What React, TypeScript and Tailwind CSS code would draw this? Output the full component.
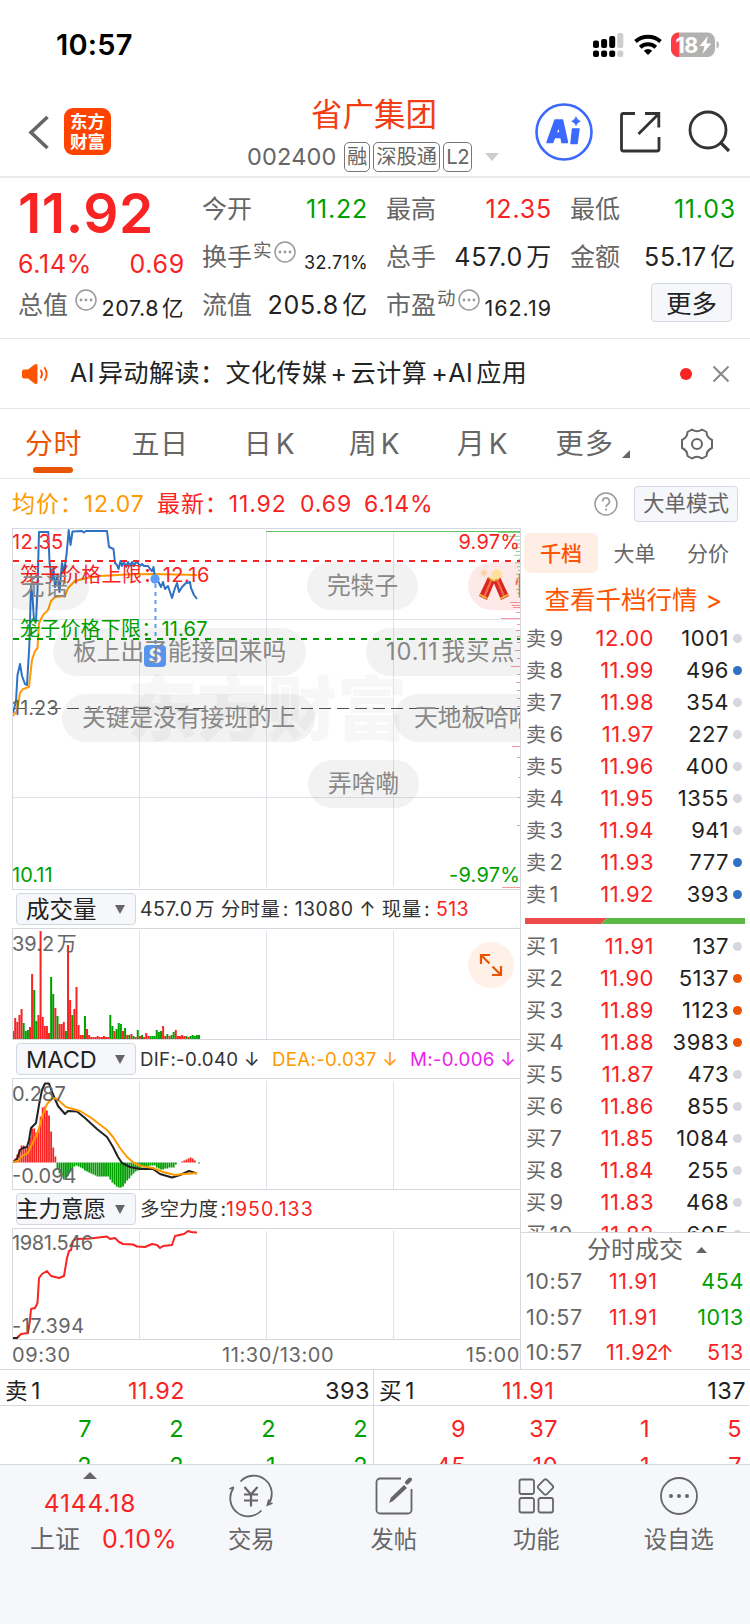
import { Fragment, type ReactNode } from 'react';
import clsx from 'clsx';

type Level = { side: string; price: string; qty: string; dot: string };

const SELLS: Level[] = [
  { side: '卖9', price: '12.00', qty: '1001', dot: 'bg-[#d5d8df]' },
  { side: '卖8', price: '11.99', qty: '496', dot: 'bg-[#2f72c4]' },
  { side: '卖7', price: '11.98', qty: '354', dot: 'bg-[#d5d8df]' },
  { side: '卖6', price: '11.97', qty: '227', dot: 'bg-[#d5d8df]' },
  { side: '卖5', price: '11.96', qty: '400', dot: 'bg-[#d5d8df]' },
  { side: '卖4', price: '11.95', qty: '1355', dot: 'bg-[#d5d8df]' },
  { side: '卖3', price: '11.94', qty: '941', dot: 'bg-[#d5d8df]' },
  { side: '卖2', price: '11.93', qty: '777', dot: 'bg-[#2f72c4]' },
  { side: '卖1', price: '11.92', qty: '393', dot: 'bg-[#2f72c4]' },
];

const BUYS: Level[] = [
  { side: '买1', price: '11.91', qty: '137', dot: 'bg-[#d5d8df]' },
  { side: '买2', price: '11.90', qty: '5137', dot: 'bg-[#ea5504]' },
  { side: '买3', price: '11.89', qty: '1123', dot: 'bg-[#ea5504]' },
  { side: '买4', price: '11.88', qty: '3983', dot: 'bg-[#ea5504]' },
  { side: '买5', price: '11.87', qty: '473', dot: 'bg-[#d5d8df]' },
  { side: '买6', price: '11.86', qty: '855', dot: 'bg-[#d5d8df]' },
  { side: '买7', price: '11.85', qty: '1084', dot: 'bg-[#d5d8df]' },
  { side: '买8', price: '11.84', qty: '255', dot: 'bg-[#d5d8df]' },
  { side: '买9', price: '11.83', qty: '468', dot: 'bg-[#d5d8df]' },
  { side: '买10', price: '11.82', qty: '605', dot: 'bg-[#d5d8df]' },
];

// positive = up minute (red), negative = down minute (green)
const VOLUME = [
  -8, 21, 17, 24, 30, -16, -8, -9, 12, 65, -49, -18, 24, 108, 22, 13, 13, 6, -62, -45, 31, -23, 15, 15, 17, -8, 94, 39,
  -24, 30, 52, 14, 4, 4, -23, 10, 4, 2, 2, 2, 3, 2, 2, 3, 2, 2, -24, -13, 8, -10, -16, -15, 8, -11, 4, -4, 5, -3, 2,
  -9, 3, -4, 2, 6, 3, -3, -3, -3, -9, -7, -8, 13, 3, -5, 3, -4, -7, 9, 3, 3, 4, 3, -3, 2, -3, -4, -3, -4, -4,
];

const MACD = [
  1, 4, 8, 13, 17, 17, 14, 16, 25, 34, 34, 30, 33, 46, 55, 56, 52, 47, 31, 15, 6, -6, -11, -14, -17, -15, -13, -9, -6,
  -4, -3, -4, -5, -6, -8, -9, -10, -11, -12, -13, -14, -14, -14, -14, -14, -14, -17, -20, -22, -24, -25, -25, -24, -21,
  -18, -16, -13, -11, -9, -8, -6, -5, -5, -4, -4, -3, -3, -3, -5, -6, -7, -7, -6, -6, -5, -5, -5, -2, 0, 0, 1, 2, 3, 4,
  5, 4, 2, 0, -1,
];

const PRICE_LINE =
  '13,713 16,701 17.5,675 20,664 22,676 25,684 27,685 29.3,646 31,586 32.5,597 34,620 36,621 37.5,590 39,532 48.3,532 49.5,562 52,580 53.5,568 55,587 57.5,575 59.5,592 62,563 64,573 66.7,553 68.7,530 70.5,545 72.5,531.5 82,531 84,532.5 86,531 107,531 109,547 113.5,549 115,563 117,565 118.5,569 120.5,561 122,566 124,562 126,567 128,562 130,566 132,562 134,566 136,562 138,563 140,566 142,564 144,566 148,566 150,569 152,571 153.5,567 155,578 158,581 161,587 163,582 165,589 168,586 172,598 175,588 177,583 179,592 182,587 186,583 190,582 191,588 194,595 197,599';
const AVG_LINE =
  '13,716 17,711 20,693 23,689 29,687 32,660 35,651 37.5,648 39,623 43,615 48,610 51,601 55,597 65,596 68,588 75,581 87,578 100,576 127,574.5 153,574 197,575';

const SELL_TICKS = [22, 14, 5, 3, 8, 4, 6, 2, 5, 3, 2, 4, 3, 5, 2, 4, 3, 2];
const BUY_TICKS: [number, number][] = [
  [602, 10], [605, 8], [607, 7], [612, 4], [618, 19], [624, 3], [630, 4], [636, 3], [642, 3], [650, 5], [658, 3], [666, 9],
  [674, 3], [682, 4], [690, 3], [698, 3], [706, 3], [746, 8], [757, 3], [777, 2], [797, 2], [825, 3], [887, 18],
];

const DANMAKU = [
  { text: '完犊子', cls: 'left-[294px] top-[33px]' },
  { text: '板上出了能接回来吗', cls: 'left-[40px] top-[99px]' },
  { text: '10.11我买点', cls: 'left-[353px] top-[99px] tracking-[0.9px]' },
  { text: '关键是没有接班的上', cls: 'left-[49px] top-[165px]' },
  { text: '天地板哈哈', cls: 'left-[381px] top-[165px]' },
  { text: '弄啥嘞', cls: 'left-[295px] top-[231px]' },
];

function StatusBar() {
  return (
    <div className="flex h-[88px] items-center pt-px pr-[30px] pl-[56px]">
      <span className="text-[29px] leading-none font-semibold tracking-[0.2px] text-black">10:57</span>
      <svg className="ml-auto" width="128" height="28" viewBox="592 31 128 28">
        {[0, 1, 2, 3].map((i) => (
          <g key={i} fill={i === 3 ? '#cdcdcd' : '#000'}>
            <rect x={593 + i * 8.1} y={[40.5, 39, 36, 33][i]} width="6" height={[7.5, 9, 12, 15][i]} rx="2" />
            <rect x={593 + i * 8.1} y="50.5" width="6" height="6.5" rx="2" />
          </g>
        ))}
        <g fill="none" stroke="#000" strokeWidth="4">
          <path d="M635.5 41.5a19 19 0 0 1 25 0" />
          <path d="M640.2 47.2a12 12 0 0 1 15.600 0" />
        </g>
        <path d="M648 55l-4.200-4.200a6 6 0 0 1 8.400 0z" />
        <clipPath id="batt">
          <rect x="671" y="32.500" width="44" height="24.500" rx="7.500" />
        </clipPath>
        <g clipPath="url(#batt)">
          <rect x="671" y="32" width="44" height="26" fill="#b1b1b1" />
          <rect x="671" y="32" width="8" height="26" fill="#ff3b44" />
        </g>
        <path d="M716.500 41v7.500c1.700-.6 2.500-2 2.500-3.700s-.8-3.200-2.500-3.800z" fill="#b8b8b8" />
        <text x="675.500" y="52.500" fontSize="21.500" fontWeight="700" fill="#fff" letterSpacing="-0.5">
          18
        </text>
        <path d="M708 36l-8.500 10h5l-2 8 8.800-10.500h-5z" fill="#fff" />
      </svg>
    </div>
  );
}

function Tag({ children }: { children: ReactNode }) {
  return (
    <span className="flex h-[30px] shrink-0 items-center rounded-[5px] border border-[#777] px-[2px] text-[20.300px] leading-none whitespace-nowrap text-[#666]">
      {children}
    </span>
  );
}

function NavBar() {
  return (
    <header className="flex h-[90px] items-start border-b-2 border-[#ebebeb]">
      <svg className="mt-[26px] ml-[27px]" width="24" height="36" viewBox="27 114 24 36" fill="none">
        <path d="M47.500 117L31 132.500l16.500 15.500" stroke="#666" strokeWidth="3.600" />
      </svg>
      <div className="mt-[20px] ml-[13px] flex h-[47px] w-[47px] flex-col items-center justify-center rounded-[9px] bg-[#ff4400] text-[17.500px] leading-[20px] font-bold text-white">
        <span>东方</span>
        <span>财富</span>
      </div>
      <div className="ml-[136px] flex w-[255px] flex-col">
        <h1 className="mt-[11px] ml-[64px] text-[31.500px] leading-[32px] whitespace-nowrap text-[#f23d13]">省广集团</h1>
        <div className="mt-[11px] flex items-center gap-[3px]">
          <span className="mr-[5px] w-[89px] shrink-0 text-[23.500px] leading-none tracking-[0.2px] text-[#666]">002400</span>
          <Tag>融</Tag>
          <Tag>深股通</Tag>
          <Tag>
            <span className="tracking-[-0.4px]">L2</span>
          </Tag>
          <svg className="ml-[10px] shrink-0" width="14" height="8" viewBox="0 0 14 8">
            <path d="M0 0h14L7 8z" fill="#ccc" />
          </svg>
        </div>
      </div>
      <svg className="mt-[13px] ml-[31px]" width="208" height="62" viewBox="533 101 208 62" fill="none">
        <circle cx="564" cy="132" r="27.500" stroke="#3b69ff" strokeWidth="2.600" />
        <g fill="#3b69ff" stroke="#3b69ff" strokeLinejoin="round">
          <path d="M547 142.500l8-22.500h7.500l5 22.500h-5.500l-1-5h-6.500l-1.800 5zM556 133h4.200l-1.400-6.500z" fillRule="evenodd" strokeWidth="1.500" />
          <path d="M572.500 129h6.500l-2 14.500h-6z" strokeWidth="1.500" />
          <path d="M576 116.500q1 3.800 4.500 4.700-3.500 1-4.500 4.600-1-3.600-4.500-4.600 3.500-.9 4.500-4.700z" strokeWidth=".5" />
        </g>
        <g stroke="#333" strokeWidth="2.800">
          <path d="M635 113.500h-11.500a2 2 0 0 0-2 2v33.500a2 2 0 0 0 2 2h33.500a2 2 0 0 0 2-2v-12" />
          <path d="M645 113.500h13.800v14M658.500 114l-20 20" />
          <circle cx="708" cy="130" r="18" />
          <path d="M720.500 142.500l8.500 8.500" strokeWidth="3.200" />
        </g>
      </svg>
    </header>
  );
}

function Dots({ className }: { className?: string }) {
  return (
    <svg className={clsx('shrink-0', className)} width="22" height="22" viewBox="0 0 22 22" fill="#999">
      <circle cx="11" cy="11" r="10" fill="none" stroke="#999" strokeWidth="1.500" />
      <circle cx="6" cy="11" r="1.400" />
      <circle cx="11" cy="11" r="1.400" />
      <circle cx="16" cy="11" r="1.400" />
    </svg>
  );
}

function Stat({ label, value, color = 'text-[#222]' }: { label: ReactNode; value: ReactNode; color?: string }) {
  return (
    <div className="flex h-[48px] items-center justify-between text-[25px] leading-none whitespace-nowrap">
      <span className="flex text-[#666]">{label}</span>
      <span className={clsx('-mr-px tracking-[0.8px]', color)}>{value}</span>
    </div>
  );
}

function Quote() {
  return (
    <section className="grid h-[161px] grid-cols-[165px_165px_165px_165px] gap-x-[19px] border-b border-[#e6e6e6] pt-[7px] pl-[18px]">
      <div>
        <div className="h-[54px] pt-px text-[55px] leading-[54px] font-semibold tracking-[0.6px] text-[#f82323]">11.92</div>
        <div className="mr-[-2px] flex h-[42px] items-center justify-between pt-[9px] text-[25px] leading-none tracking-[0.7px] text-[#f82323]">
          <span>6.14%</span>
          <span>0.69</span>
        </div>
        <Stat
          label={
            <>
              总值
              <Dots className="-mt-[4px] ml-[7px]" />
            </>
          }
          value={<span className="relative top-[2px] text-[21.500px] tracking-[0.6px]">207.8亿</span>}
        />
      </div>
      <div>
        <Stat label="今开" value="11.22" color="text-[#009f00]" />
        <Stat
          label={
            <>
              换手<sup className="top-[-4px] ml-px text-[18.500px] leading-none">实</sup>
              <Dots className="-mt-[4px] ml-[2px]" />
            </>
          }
          value={<span className="relative top-[3px] text-[18px] tracking-[0.3px]">32.71%</span>}
        />
        <Stat label="流值" value="205.8亿" />
      </div>
      <div>
        <Stat label="最高" value="12.35" color="text-[#f82323]" />
        <Stat label="总手" value="457.0万" />
        <Stat
          label={
            <>
              市盈<sup className="top-[-4px] ml-px text-[18.500px] leading-none">动</sup>
              <Dots className="-mt-[4px] ml-[2px]" />
            </>
          }
          value={<span className="relative top-[2px] text-[21.500px] tracking-[1px]">162.19</span>}
        />
      </div>
      <div>
        <Stat label="最低" value="11.03" color="text-[#009f00]" />
        <Stat label="金额" value="55.17亿" />
        <button className="mt-[2px] ml-[81px] flex h-[39px] w-[81px] items-center justify-center rounded-[4px] border border-[#d3d8e0] bg-[#f6f7fa] pt-[2px] text-[25.500px] leading-none text-[#222]">
          更多
        </button>
      </div>
    </section>
  );
}

function NewsRow() {
  return (
    <div className="flex h-[70px] items-center border-b border-[#e6e6e6] pr-[20px] pl-[22px]">
      <svg width="27" height="22" viewBox="0 0 27 22" fill="#ff5500">
        <path d="M0 8.500q0-2 2-2h4L12.500 1.500Q15.500 0 15.500 3v16q0 3-3 1.500L6 15.500H2q-2 0-2-2z" />
        <g fill="none" stroke="#ff5500" strokeWidth="1.900" strokeLinecap="round">
          <path d="M19 7.500q2 3.500 0 7" />
          <path d="M22.800 5q3.800 6 0 12" />
        </g>
      </svg>
      <span className="ml-[21px] text-[25px] leading-none tracking-[0.500px] whitespace-nowrap text-[#222]">
        AI异动解读：文化传媒<span className="mx-[3px]">+</span>云计算<span className="ml-[4px]">+AI</span>应用
      </span>
      <span className="ml-auto h-[12px] w-[12px] rounded-full bg-[#f82323]" />
      <svg className="ml-[20px]" width="18" height="18" viewBox="0 0 18 18">
        <path d="M1.500 1.500l15 15M16.500 1.500l-15 15" stroke="#888" strokeWidth="2" />
      </svg>
    </div>
  );
}

function Tabs() {
  return (
    <nav className="grid h-[70px] grid-cols-[107px_106px_113px_97px_119px_101px_109px] items-center justify-items-center border-b border-[#e6e6e6] text-[28px] leading-none tracking-[0.5px] text-[#666]">
      <div className="flex h-full flex-col items-center text-[#ea5504]">
        <span className="mt-[21px]">分时</span>
        <span className="mt-[9px] h-[6px] w-[40px] rounded-full bg-[#ea5504]" />
      </div>
      <span>五日</span>
      <span>日K</span>
      <span>周K</span>
      <span>月K</span>
      <span className="flex items-end tracking-[1.500px]">
        更多
        <svg className="ml-[7px]" width="8" height="8" viewBox="0 0 8 8">
          <path d="M8 0v8H0z" fill="#666" />
        </svg>
      </span>
      <svg width="34" height="34" viewBox="-16 -17 34 34" fill="none" stroke="#666" strokeWidth="2">
        <path
          d="M-5 -14.500Q0 -11 5 -14.500L9.500 -12Q9.500 -6.500 15 -4V4Q9.500 6.500 9.500 12L5 14.500Q0 11 -5 14.500L-9.500 12Q-9.500 6.500 -15 4V-4Q-9.500 -6.500 -9.500 -12Z"
          strokeLinejoin="round"
        />
        <circle r="5" />
      </svg>
    </nav>
  );
}

function ChartHeader() {
  return (
    <div className="flex h-[49px] items-center pr-[12px] pl-[12px] text-[23px] leading-none tracking-[0.900px] whitespace-nowrap text-[#f82323]">
      <span className="w-[145px] pt-[2px] text-[#ff9900]">均价：12.07</span>
      <span className="w-[143px] pt-[2px]">最新：11.92</span>
      <span className="w-[64px] pt-[2px]">0.69</span>
      <span className="pt-[2px]">6.14%</span>
      <svg className="ml-auto" width="24" height="24" viewBox="0 0 24 24" fill="none">
        <circle cx="12" cy="12" r="11" stroke="#999" strokeWidth="1.500" />
        <path d="M8.500 9.500a3.500 3.500 0 1 1 5.200 3c-1.300.8-1.700 1.300-1.700 2.500" stroke="#999" strokeWidth="1.600" />
        <circle cx="12" cy="17.500" r="1.100" fill="#999" />
      </svg>
      <button className="ml-[16px] flex h-[36px] w-[104px] items-center justify-center rounded-[4px] border border-[#d3d8e0] bg-[#f6f7fa] text-[21.500px] tracking-normal text-[#666]">
        大单模式
      </button>
    </div>
  );
}

function GridLines({ top, bottom }: { top: number; bottom: number }) {
  return (
    <g stroke="#e2e3ea" strokeWidth="1">
      {[139.5, 266.5, 393.5].map((x) => (
        <line key={x} x1={x} x2={x} y1={top} y2={bottom} />
      ))}
    </g>
  );
}

function ChartLabel({ className, children }: { className: string; children: ReactNode }) {
  return <span className={clsx('absolute text-[20px] leading-none whitespace-nowrap', className)}>{children}</span>;
}

function PriceChart() {
  return (
    <div className="relative h-[362px] overflow-hidden border-y border-l border-[#d6d8df]">
      <span className="absolute top-[139px] left-[114px] text-[70px] leading-[84px] font-black whitespace-nowrap text-black/[0.03]">
        东方财富
      </span>
      <svg className="absolute inset-0" width="507" height="360" viewBox="13 529 507 360" fill="none">
        <GridLines top={531} bottom={887} />
        <path d="M13 619.500H520M13 797.500H520" stroke="#e2e3ea" />
        <path d="M13 708.500H520" stroke="#555" strokeDasharray="12 6" />
        <path d="M266 531.500H520" stroke="#5fc25f" />
        {SELL_TICKS.map((w, i) => (
          <line key={i} x1={520 - w} x2="520" y1={532.5 + i * 3.8} y2={532.5 + i * 3.8} stroke="#8fd48f" />
        ))}
        {BUY_TICKS.map(([y, w]) => (
          <line key={y} x1={520 - w} x2="520" y1={y + 0.5} y2={y + 0.5} stroke="#f79a9a" />
        ))}
        <polyline points={AVG_LINE} stroke="#ff9900" strokeWidth="2" />
        <polyline points={PRICE_LINE} stroke="#2f72c4" strokeWidth="2" strokeLinejoin="round" />
        <path d="M13 561H520" stroke="#f82323" strokeWidth="2" strokeDasharray="6 6" />
        <path d="M13 639H520" stroke="#009f00" strokeWidth="2" strokeDasharray="6 6" />
        <path d="M155.500 584V645" stroke="#5b9df8" strokeWidth="2" strokeDasharray="4 4" />
        <circle cx="155" cy="579" r="4.700" fill="#5b9df8" />
      </svg>
      <span className="absolute top-[116px] left-[131px] flex h-[22px] w-[22px] items-center justify-center rounded-[4px] bg-[#5b9df8] text-[20px] leading-none font-bold text-white">
        S
      </span>
      <ChartLabel className="top-[3px] left-[-1px] tracking-[0.3px] text-[#f82323]">12.35</ChartLabel>
      <ChartLabel className="top-[3px] right-0 tracking-[0.2px] text-[#f82323]">9.97%</ChartLabel>
      <ChartLabel className="top-[36px] left-[7px] tracking-[0.4px] text-[#f82323]">笼子价格上限：12.16</ChartLabel>
      <ChartLabel className="top-[90px] left-[7px] tracking-[0.2px] text-[#009f00]">笼子价格下限：11.67</ChartLabel>
      <ChartLabel className="top-[169px] left-[-1px] text-[#666]">11.23</ChartLabel>
      <ChartLabel className="top-[336px] left-[-1px] text-[#009f00]">10.11</ChartLabel>
      <ChartLabel className="top-[336px] right-0 tracking-[0.2px] text-[#009f00]">-9.97%</ChartLabel>
      <span className="absolute top-[34px] left-[-13px] flex h-[47px] items-center rounded-full bg-black/5 px-[21px] text-[23.500px] text-[#888]">
        无语
      </span>
      {DANMAKU.map((d) => (
        <span
          key={d.text}
          className={clsx(
            'absolute flex h-[48px] items-center rounded-full bg-black/5 px-[20px] text-[23.700px] leading-none whitespace-nowrap text-[#888]',
            d.cls,
          )}
        >
          {d.text}
        </span>
      ))}
      <span className="absolute top-[33px] left-[455px] flex h-[48px] w-[120px] items-center rounded-full bg-[#f82323]/10 pl-[47px] text-[23.700px] leading-none whitespace-nowrap text-[#f25b5b]">
        惊喜
      </span>
      <svg className="absolute top-[39px] left-[465px]" width="32" height="34" viewBox="0 0 32 34">
        <path d="M10 9l7 4-8 19-8-4z" fill="#d8281e" />
        <path d="M22 9l-7 4 8 19 8-4z" fill="#d8281e" />
        <path d="M12.500 11l2 1-7.500 18-2-1z" fill="#f4684e" />
        <path d="M20 11l-2 1 7.500 18 2-1z" fill="#f4684e" />
        <path d="M1.500 26.500l8 4M30.500 26.500l-8 4M10.500 9.500l6 3.500M21.500 9.500l-6 3.500" stroke="#f3bd3c" strokeWidth="1.600" />
        <path d="M18 0l1.500 2.500L22 1l.3 3 3 .5-2 2.300L25 9l-3 .2-1.500 2.500L18 10l-2.500 1.500L15 9l-3-.5 2-2.300L12.500 4l3-.3z" fill="#fde09a" />
        <path d="M6 1v8M2 5h8M3.500 2.500l5 5M8.500 2.500l-5 5" stroke="#f7c98c" strokeWidth="1" />
      </svg>
    </div>
  );
}

function IndicatorRow({ name, children }: { name: string; children: ReactNode }) {
  return (
    <div className="flex h-[38px] items-center pl-[4px] leading-none whitespace-nowrap text-[#333]">
      <button className="flex h-[32px] w-[120px] shrink-0 items-center justify-between rounded-[4px] border border-[#d3d8e0] bg-[#f6f7fa] pt-px pr-[10px] text-[#222]">
        <span className={name === '主力意愿' ? 'ml-[-1px] text-[22.500px]' : 'pl-[9px] text-[23.500px]'}>{name}</span>
        <svg width="10" height="9" viewBox="0 0 10 9">
          <path d="M0 0h10L5 9z" fill="#666" />
        </svg>
      </button>
      <div className="ml-[4px] flex pt-[2px]">{children}</div>
    </div>
  );
}

function VolumeChart() {
  return (
    <div className="relative h-[112px] border-y border-l border-[#d6d8df]">
      <svg className="absolute inset-0" width="507" height="110" viewBox="13 929 507 110">
        <GridLines top={931} bottom={1039} />
        {VOLUME.map((v, i) => (
          <rect key={i} x={12.1 + i * 2.113} y={1039 - Math.abs(v)} width="2" height={Math.abs(v)} fill={v > 0 ? '#f82323' : '#009f00'} />
        ))}
      </svg>
      <ChartLabel className="top-[5px] left-[-1px] text-[#666]">39.2万</ChartLabel>
      <span className="absolute top-[13px] left-[455px] flex h-[46px] w-[46px] items-center justify-center rounded-full bg-[#fff0e8]">
        <svg width="24" height="24" viewBox="0 0 24 24" fill="none" stroke="#ea5504" strokeWidth="2.200">
          <path d="M2 11V2h9M2 2l8.500 8.500M22 13v9h-9M22 22l-8.500-8.500" />
        </svg>
      </span>
    </div>
  );
}

function MacdChart() {
  return (
    <div className="relative h-[112px] border-y border-l border-[#d6d8df]">
      <svg className="absolute inset-0" width="507" height="110" viewBox="13 1079 507 110" fill="none">
        <GridLines top={1081} bottom={1189} />
        {MACD.map((v, i) => (
          <rect
            key={i}
            x={12.2 + i * 2.113}
            y={v > 0 ? 1162.5 - v : 1162.5}
            width="1.800"
            height={Math.abs(v)}
            fill={v > 0 ? '#f82323' : '#009f00'}
          />
        ))}
        <polyline
          points="13,1162 17,1159 20,1150 23,1148 27,1147 29,1140 31,1128 36,1123 39,1105 42,1090 45,1083.5 49,1083.500 52,1092 58,1106 65,1114 68,1111 77,1111.5 85,1118 97,1129 107,1137 113,1147 118,1157 122,1163 130,1167 140,1169 153,1169 160,1174 172,1177.5 180,1175 189,1171 197,1173.5"
          stroke="#222"
          strokeWidth="2"
          strokeLinejoin="round"
        />
        <polyline
          points="13,1162 18,1161 22,1156 28,1153 32,1144 38,1132 42,1117 47,1104 53,1098 57,1099 66,1107 80,1111 90,1117 107,1130 113,1137 120,1148 127,1157 134,1163 141,1166 153,1168 163,1172 175,1175 184,1174 197,1173"
          stroke="#ff9900"
          strokeWidth="2"
          strokeLinejoin="round"
        />
      </svg>
      <ChartLabel className="top-[5px] left-[-1px] text-[#666]">0.287</ChartLabel>
      <ChartLabel className="top-[87px] left-[-1px] text-[#666]">-0.094</ChartLabel>
    </div>
  );
}

function ForceChart() {
  return (
    <div className="relative h-[112px] border-y border-l border-[#d6d8df]">
      <svg className="absolute inset-0" width="507" height="110" viewBox="13 1229 507 110" fill="none">
        <GridLines top={1231} bottom={1339} />
        <polyline points="13,1338 17,1338 19,1336" stroke="#222" strokeWidth="2" />
        <polyline
          points="18,1337 21,1334 28,1333 30,1320 31,1309 35,1308 37.5,1303 39,1278 42,1274 47,1271 51,1276 59,1278 64,1276 67,1258 69,1251 71,1250 73,1241 76,1239 90,1238.500 107,1236.5 110,1239 115,1238 119,1242 123,1244 133,1244.500 137,1246.500 145,1247 152,1244 157,1245 160,1248 163,1246 172,1245 175,1236 184,1234 188,1231 191,1232 197,1232.5"
          stroke="#f82323"
          strokeWidth="2"
          strokeLinejoin="round"
        />
      </svg>
      <ChartLabel className="top-[4px] left-[-1px] tracking-[-0.4px] text-[#666]">1981.546</ChartLabel>
      <ChartLabel className="top-[87px] left-[-1px] tracking-[0.5px] text-[#666]">-17.394</ChartLabel>
    </div>
  );
}

function Charts() {
  return (
    <div className="w-[508px] shrink-0">
      <PriceChart />
      <IndicatorRow name="成交量">
        <span className="text-[19.500px] tracking-[0.4px]">457.0万 分时量: 13080 ↑ 现量:&nbsp;</span>
        <span className="text-[19.500px] tracking-[0.4px] text-[#f82323]">513</span>
      </IndicatorRow>
      <VolumeChart />
      <IndicatorRow name="MACD">
        <span className="w-[132px] text-[18.700px] tracking-[0.3px]">DIF:-0.040 ↓</span>
        <span className="w-[138px] text-[18.700px] tracking-[0.3px] text-[#ff9900]">DEA:-0.037 ↓</span>
        <span className="text-[18.700px] tracking-[0.3px] text-[#ea1fea]">M:-0.006 ↓</span>
      </IndicatorRow>
      <MacdChart />
      <IndicatorRow name="主力意愿">
        <span className="text-[19.500px]">多空力度:</span>
        <span className="text-[19.500px] tracking-[1px] text-[#f82323]">1950.133</span>
      </IndicatorRow>
      <ForceChart />
      <div className="flex h-[29px] items-center text-[20px] leading-none tracking-[0.6px] text-[#666]">
        <span className="w-[210px]">09:30</span>
        <span>11:30/13:00</span>
        <span className="ml-auto">15:00</span>
      </div>
    </div>
  );
}

function LevelRow({ side, price, qty, dot }: Level) {
  return (
    <div className="flex h-[32px] shrink-0 items-center pr-[8px] pl-[5px] text-[22px] leading-none">
      <span className="w-[56px] text-[20px] whitespace-nowrap text-[#666]">
        {side.slice(0, 1)}
        <span className="ml-px text-[22px]">{side.slice(1)}</span>
      </span>
      <span className="w-[72px] text-right tracking-[0.500px] text-[#f82323]">{price}</span>
      <span className="flex-1 text-right tracking-[0.5px] text-[#222]">{qty}</span>
      <span className={clsx('ml-[4px] h-[9px] w-[9px] rounded-full', dot)} />
    </div>
  );
}

function OrderBook() {
  const trades = [
    { price: '11.91', arrow: '', qty: '454', color: 'text-[#009f00]' },
    { price: '11.91', arrow: '', qty: '1013', color: 'text-[#009f00]' },
    { price: '11.92', arrow: '↑', qty: '513', color: 'text-[#f82323]' },
  ];
  return (
    <aside className="flex w-[230px] flex-col border-l border-[#d6d8df]">
      <div className="mt-[5px] ml-[3px] grid h-[40px] shrink-0 grid-cols-[74px_73px_74px] text-[21px] leading-none text-[#666]">
        <span className="flex items-center justify-center rounded-[6px] bg-[#ffeee6] font-medium text-[#ff5500]">千档</span>
        <span className="flex items-center justify-center">大单</span>
        <span className="flex items-center justify-center">分价</span>
      </div>
      <div className="flex h-[49px] shrink-0 items-center justify-center gap-[8px] pt-[5px] pr-[4px] text-[25.500px] leading-none text-[#ff5500]">
        查看千档行情 <span>&gt;</span>
      </div>
      {SELLS.map((l) => (
        <LevelRow key={l.side} {...l} />
      ))}
      <svg className="mt-[8px] ml-[4px] shrink-0" width="220" height="6" viewBox="0 0 220 6">
        <path d="M0 0h82l-6 6H0z" fill="#ee4b4b" />
        <path d="M82 0h138v6H76z" fill="#5cb948" />
      </svg>
      <div className="mt-[6px] flex h-[303px] shrink-0 flex-col overflow-hidden border-b border-[#d6d8df]">
        {BUYS.map((l) => (
          <LevelRow key={l.side} {...l} />
        ))}
      </div>
      <div className="flex h-[31px] shrink-0 items-center justify-center gap-[13px] pt-[2px] pl-[23px] text-[24px] leading-none text-[#666]">
        分时成交
        <svg width="11" height="6" viewBox="0 0 11 6">
          <path d="M0 6L5.500 0 11 6z" fill="#666" />
        </svg>
      </div>
      {trades.map((t, i) => (
        <div key={i} className="flex h-[35.500px] shrink-0 items-center pr-[6px] pl-[5px] text-[21.500px] leading-none tracking-[0.6px]">
          <span className="w-[80px] text-[#666]">10:57</span>
          <span className={clsx('text-[#f82323]', !t.arrow && 'pl-[3px]')}>
            {t.price}
            {t.arrow && <span className="ml-[-3px]">{t.arrow}</span>}
          </span>
          <span className={clsx('flex-1 text-right', t.color)}>{t.qty}</span>
        </div>
      ))}
    </aside>
  );
}

function QueueSide({ side, price, qty, rows, color }: { side: string; price: string; qty: string; rows: string[][]; color: string }) {
  return (
    <div className="text-[23.500px] leading-none tracking-[0.5px]">
      <div className="flex h-[36px] items-center border-b border-[#d6d8df] pt-[7px] pr-[3px] pl-[5px] text-[#222]">
        <span className="w-[123px] text-[22.500px] tracking-[1px]">{side}</span>
        <span className="text-[#f82323]">{price}</span>
        <span className="ml-auto">{qty}</span>
      </div>
      <div className={clsx('grid grid-cols-[92px_92px_92px_92px] pt-[4px] text-right', color)}>
        {rows.map((r, i) => (
          <Fragment key={i}>
            {r.map((v, j) => (
              <span key={j} className="flex h-[37px] items-center justify-end">
                {v}
              </span>
            ))}
          </Fragment>
        ))}
      </div>
    </div>
  );
}

function Queues() {
  return (
    <section className="grid h-[95px] grid-cols-[373px_376px] overflow-hidden border-t border-[#d6d8df]">
      <QueueSide side="卖1" price="11.92" qty="393" color="text-[#009f00]" rows={[['7', '2', '2', '2'], ['2', '2', '1', '2']]} />
      <div className="border-l border-[#d6d8df]">
        <QueueSide side="买1" price="11.91" qty="137" color="text-[#f82323]" rows={[['9', '37', '1', '5'], ['45', '10', '1', '7']]} />
      </div>
    </section>
  );
}

function TabItem({ label, children }: { label: string; children: ReactNode }) {
  return (
    <div className="flex w-[143px] flex-col items-center pt-[9px]">
      <svg width="44" height="44" viewBox="-22 -22 44 44" fill="none" stroke="#666" strokeWidth="1.800">
        {children}
      </svg>
      <span className="mt-[10px] text-[23.300px] leading-none">{label}</span>
    </div>
  );
}

function BottomBar() {
  return (
    <footer className="flex h-[160px] border-t border-[#d6d8df] bg-[#f6f7fa] text-[#666]">
      <div className="flex w-[180px] shrink-0 flex-col items-center leading-none text-[#f82323]">
        <svg className="mt-[7px]" width="14" height="7" viewBox="0 0 14 7">
          <path d="M0 7L7 0l7 7z" fill="#666" />
        </svg>
        <span className="mt-[12px] text-[24.500px] tracking-[0.9px]">4144.18</span>
        <div className="mt-[11px] flex w-[150px] items-center">
          <span className="ml-[15px] w-[72px] shrink-0 text-[25px] text-[#666]">上证</span>
          <span className="text-[25px] tracking-[1px]">0.10%</span>
        </div>
      </div>
      <TabItem label="交易">
        <path d="M-10.500 -14.500A18 18 0 0 1 17.500 8M10.500 14.500A18 18 0 0 1 -17.500 -8M-21.500 -7l4.500-2 0 0M21.500 7l-5 2 1.500-5.500" />
        <path d="M-6.500 -9L0 -1.500 6.500 -9M0 -1.500V10.500M-7 -1.500H7M-7 4.500H7" strokeWidth="2.200" />
      </TabItem>
      <TabItem label="发帖">
        <path d="M7 -17.500H-14a3.500 3.500 0 0 0-3.500 3.500V14a3.500 3.500 0 0 0 3.500 3.500H14a3.500 3.500 0 0 0 3.500-3.500V-7" />
        <path d="M-5 7l2-5.500 13-12.500 3 3L-1 5z" fill="#666" stroke="none" />
        <path d="M13 -13.500l3-3" strokeWidth="4" strokeLinecap="round" />
      </TabItem>
      <TabItem label="功能">
        <rect x="-16.500" y="-16.500" width="14.500" height="14.500" rx="2" />
        <rect x="-16.500" y="2" width="14.500" height="14.500" rx="2" />
        <rect x="2.500" y="2" width="14.500" height="14.500" rx="2" />
        <rect x="3.500" y="-15" width="12" height="12" rx="2" transform="rotate(45 9.500 -9)" />
      </TabItem>
      <TabItem label="设自选">
        <circle r="18" />
        <g fill="#666" stroke="none">
          <circle cx="-8" r="2" />
          <circle r="2" />
          <circle cx="8" r="2" />
        </g>
      </TabItem>
    </footer>
  );
}

export default function App() {
  return (
    <div
      lang="zh-CN"
      className="h-[1624px] w-[750px] overflow-hidden bg-white font-['Inter','Noto_Sans_CJK_SC',sans-serif] [text-autospace:normal]"
    >
      <StatusBar />
      <NavBar />
      <Quote />
      <NewsRow />
      <Tabs />
      <ChartHeader />
      <div className="flex h-[841px] pl-[12px]">
        <Charts />
        <OrderBook />
      </div>
      <Queues />
      <BottomBar />
    </div>
  );
}
